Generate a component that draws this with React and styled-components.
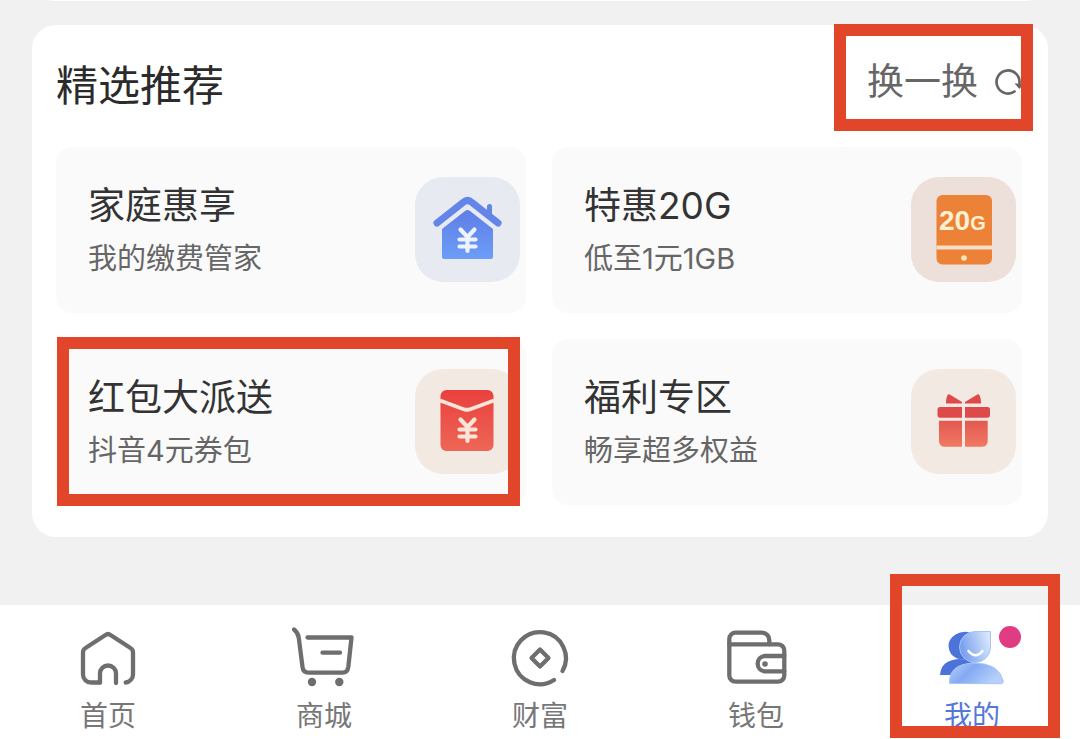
import React from "react";
import styled, { createGlobalStyle } from "styled-components";

const offers = [
  { title: "家庭惠享", text: "我的缴费管家", tile: "#e7ebf1", Icon: HouseIcon },
  { title: "特惠20G", text: "低至1元1GB", tile: "#eddfd9", Icon: PhoneIcon },
  {
    title: "红包大派送",
    text: "抖音4元券包",
    tile: "#f2e9e3",
    Icon: EnvelopeIcon,
    marked: true,
  },
  { title: "福利专区", text: "畅享超多权益", tile: "#f3e9e3", Icon: GiftIcon },
];

const tabs = [
  { label: "首页", Icon: HomeIcon },
  { label: "商城", Icon: CartIcon },
  { label: "财富", Icon: CoinIcon },
  { label: "钱包", Icon: WalletIcon },
  { label: "我的", Icon: UsersIcon, active: true },
];

export default function App() {
  return (
    <Page>
      <GlobalStyle />
      <PreviousSection>
        <PreviousCard />
      </PreviousSection>
      <Section>
        <SectionHeader>
          <SectionTitle>精选推荐</SectionTitle>
          <RefreshButton type="button">
            换一换
            <RefreshIcon />
            <Marker $inset="-1px -11px 16px -33px" />
          </RefreshButton>
        </SectionHeader>
        <OfferGrid>
          {offers.map(({ title, text, tile, Icon, marked }) => (
            <OfferCard href="#" key={title}>
              <OfferInfo>
                <OfferTitle>{title}</OfferTitle>
                <OfferText>{text}</OfferText>
              </OfferInfo>
              <OfferTile $color={tile}>
                <Icon />
              </OfferTile>
              {marked && <Marker $inset="-2px 6px -1px 1px" />}
            </OfferCard>
          ))}
        </OfferGrid>
      </Section>
      <TabBar>
        {tabs.map(({ label, Icon, active }) => (
          <Tab href="#" key={label} $active={active}>
            <TabIcon>
              <Icon />
              {active && <Badge />}
            </TabIcon>
            {label}
            {active && <Marker $inset="-31px 20px 1px 26px" />}
          </Tab>
        ))}
      </TabBar>
    </Page>
  );
}

function RefreshIcon() {
  return (
    <svg width="28" height="28" viewBox="0 0 28 28" overflow="visible">
      <path
        d="M20.5 23.5A11.5 11.5 0 1 1 25.5 15"
        fill="none"
        stroke="#666"
        strokeWidth="2.7"
        strokeLinecap="round"
      />
      <path d="M20.500 15.500H30L25.500 21z" fill="#666" />
    </svg>
  );
}

function YenMark({ y, color }) {
  return (
    <svg x="42" y={y} width="21" height="28" viewBox="0 0 21 28">
      <path
        d="M3.500 3.500L10.500 11L17.500 3.500M10.500 11V25M2.500 13.500H18.500M2.500 20.500H18.500"
        fill="none"
        stroke={color}
        strokeWidth="4.200"
        strokeLinecap="round"
        strokeLinejoin="round"
      />
    </svg>
  );
}

function HouseIcon() {
  return (
    <svg width="105" height="105" viewBox="0 0 105 105">
      <defs>
        <linearGradient id="house" x1="0" y1="0" x2="0" y2="1">
          <stop offset="0" stopColor="#5f7de6" />
          <stop offset="1" stopColor="#6c9df8" />
        </linearGradient>
      </defs>
      <path
        d="M22 46L48 25.500Q52.500 21.500 57 25.500L83 46"
        fill="none"
        stroke="#6385ea"
        strokeWidth="7"
        strokeLinecap="round"
        strokeLinejoin="round"
      />
      <path
        d="M74.500 29.500V39"
        stroke="#6385ea"
        strokeWidth="5"
        strokeLinecap="round"
      />
      <path
        d="M27 52L50 34Q52.500 32 55 34L78 52V80Q78 82 76 82H29Q27 82 27 80z"
        fill="url(#house)"
      />
      <YenMark y="49" color="#eef3ff" />
    </svg>
  );
}

function PhoneIcon() {
  return (
    <svg width="105" height="105" viewBox="0 0 105 105">
      <rect x="25.500" y="18" width="55.500" height="69.500" rx="6" fill="#ec8138" />
      <path d="M25.500 70.500H81" stroke="#f6dfc8" strokeWidth="4" />
      <circle cx="53" cy="81" r="2.800" fill="#ffe3b8" />
      <PhoneLabel x="28" y="53">
        20<tspan fontSize="20">G</tspan>
      </PhoneLabel>
    </svg>
  );
}

function EnvelopeIcon() {
  return (
    <svg width="105" height="105" viewBox="0 0 105 105">
      <defs>
        <linearGradient id="envelope" x1="0" y1="0" x2="0" y2="1">
          <stop offset="0" stopColor="#e9403e" />
          <stop offset="1" stopColor="#ee6656" />
        </linearGradient>
      </defs>
      <rect x="25.500" y="21" width="53" height="61" rx="6" fill="url(#envelope)" />
      <path
        d="M25 31.500L48 40Q52 41.500 56 40L79 31.500"
        fill="none"
        stroke="#fbe4d8"
        strokeWidth="3.800"
      />
      <YenMark y="47" color="#fbe4d8" />
    </svg>
  );
}

function GiftIcon() {
  return (
    <svg width="105" height="105" viewBox="0 0 105 105">
      <defs>
        <linearGradient id="gift" x1="0" y1="51" x2="0" y2="78" gradientUnits="userSpaceOnUse">
          <stop offset="0" stopColor="#e25750" />
          <stop offset="1" stopColor="#f07a64" />
        </linearGradient>
      </defs>
      <g fill="#dd4a49">
        <path d="M35 34.500Q35 28 37 25.500Q38 25 39.500 26L51 33V34.500z" />
        <path d="M70 34.500Q70 28 68 25.500Q67 25 65.500 26L54 33V34.500z" />
        <path d="M29 38H51V48.700H29Q26.500 48.700 26.500 46V40.500Q26.500 38 29 38z" />
        <path d="M54 38H76.500Q79 38 79 40.500V46Q79 48.700 76.500 48.700H54z" />
      </g>
      <g fill="url(#gift)">
        <path d="M28 51.700H51V77.700H34Q28 77.700 28 71.700z" />
        <path d="M54 51.700H76.700V71.700Q76.700 77.700 70.700 77.700H54z" />
      </g>
    </svg>
  );
}

function HomeIcon() {
  return (
    <LineSvg viewBox="0 0 64 64">
      <path d="M24 55.500H15A8 8 0 0 1 7 47.500V25.500Q7 22.500 9.500 21L29.500 8Q32 6 34.500 8L54.500 21Q57 22.500 57 25.500V47.500A8 8 0 0 1 49.700 55.500" />
      <path d="M24 55.500V46.500A8 8 0 0 1 40 46.500V56" />
    </LineSvg>
  );
}

function CartIcon() {
  return (
    <LineSvg viewBox="0 0 64 64">
      <path d="M2 2.500Q6 5.500 6.800 11L10.500 40Q11.200 45.700 16.500 45.700H50.500Q55.500 45.700 56.300 40L59.500 10.500H15.500" />
      <path d="M30.500 25.700H48" />
      <circle className="solid" cx="20" cy="55" r="4.200" />
      <circle className="solid" cx="47.300" cy="55" r="4.200" />
    </LineSvg>
  );
}

function CoinIcon() {
  return (
    <LineSvg viewBox="0 0 64 64">
      <path d="M46 53A26 26 0 1 1 54.500 44" />
      <path d="M32 22.500L40.500 31L32 39.500L23.500 31z" />
    </LineSvg>
  );
}

function WalletIcon() {
  return (
    <LineSvg viewBox="0 0 64 64">
      <path d="M5.300 17.300V12A6.300 6.300 0 0 1 11.600 5.700H38A7.300 7.300 0 0 1 45.300 13V17.300" />
      <path d="M5.300 17.300H54A6.300 6.300 0 0 1 60.300 23.600V48.400A6.300 6.300 0 0 1 54 54.700H11.600A6.300 6.300 0 0 1 5.300 48.400z" />
      <path d="M60.300 29H40.500A7.700 7.700 0 0 0 40.500 44.300H60.300" />
      <circle className="solid" cx="41" cy="37" r="2.800" />
    </LineSvg>
  );
}

function UsersIcon() {
  return (
    <svg width="64" height="64" viewBox="0 0 64 64">
      <defs>
        <linearGradient id="face" x1="0" y1="0.600" x2="1" y2="0.300">
          <stop offset="0" stopColor="#7199ee" />
          <stop offset="1" stopColor="#d9e8fb" />
        </linearGradient>
        <linearGradient id="body" x1="0" y1="0" x2="1" y2="0.400">
          <stop offset="0" stopColor="#b9d2fa" />
          <stop offset="0.450" stopColor="#85a9f3" />
          <stop offset="1" stopColor="#b5d0fa" />
        </linearGradient>
      </defs>
      <path d="M31 5.500Q22 3.500 15.500 7.500Q8.500 12 8.500 19Q9 28 17 31.500L26 33z" fill="#4c73da" />
      <path d="M0 48Q1 33 19 32Q32 32 36 40L12 48z" fill="#4c73da" />
      <path
        d="M9.500 56.500Q8.500 37 34 36Q59 36 63.300 54Q63.300 56.700 61 56.700z"
        fill="url(#body)"
        stroke="#a9c6f8"
        strokeWidth="1"
      />
      <path
        d="M35 4.500H50.500V20A15.500 15.500 0 1 1 35 4.500z"
        fill="url(#face)"
        stroke="#a6c4f7"
        strokeWidth="1"
      />
      <path
        d="M28.500 24Q35.500 32.500 42.500 24"
        fill="none"
        stroke="#fff"
        strokeWidth="2.600"
        strokeLinecap="round"
      />
    </svg>
  );
}

const GlobalStyle = createGlobalStyle`
  * {
    box-sizing: border-box;
  }
  body {
    margin: 0;
    background-color: #f1f1f1;
    font-family: Inter, "Noto Sans CJK SC", sans-serif;
  }
  a {
    color: inherit;
    text-decoration: none;
  }
`;

const Page = styled.div`
  min-height: 100vh;
  display: flex;
  flex-direction: column;
  overflow: hidden;
`;

// only the lower edge of the card above is in view
const PreviousSection = styled.div`
  height: 1px;
  flex-shrink: 0;
  display: flex;
  align-items: flex-end;
  overflow: hidden;
  padding: 0 32px;
`;

const PreviousCard = styled.div`
  flex: 1;
  height: 48px;
  border-radius: 24px;
  background-color: white;
`;

const Section = styled.section`
  margin: 24px 32px 68px;
  padding: 0 26px 32px 24px;
  border-radius: 24px;
  background-color: white;
`;

const SectionHeader = styled.header`
  height: 122px;
  display: flex;
  justify-content: space-between;
  align-items: center;
`;

const SectionTitle = styled.h2`
  margin: 0;
  font-size: 42px;
  font-weight: 400;
  line-height: 60px;
  color: #2b2b2b;
`;

const RefreshButton = styled.button`
  position: relative;
  height: 100%;
  display: flex;
  align-items: center;
  gap: 16px;
  padding: 0 0 8px;
  border: none;
  background: none;
  font-family: inherit;
  font-size: 37px;
  line-height: 54px;
  color: #666;
  cursor: pointer;
`;

const OfferGrid = styled.div`
  display: grid;
  grid-template-columns: 1fr 1fr;
  gap: 26px;
`;

const OfferCard = styled.a`
  position: relative;
  height: 166px;
  display: flex;
  justify-content: space-between;
  align-items: center;
  padding: 0 6px 2px 32px;
  border-radius: 16px;
  background-color: #fafafa;
`;

const OfferInfo = styled.div`
  display: flex;
  flex-direction: column;
  gap: 4px;
  padding-top: 2px;
`;

const OfferTitle = styled.div`
  font-size: 37px;
  line-height: 54px;
  color: #333;
`;

const OfferText = styled.div`
  font-size: 29px;
  line-height: 44px;
  color: #666;
`;

const OfferTile = styled.div`
  width: 105px;
  height: 105px;
  flex-shrink: 0;
  border-radius: 28px;
  background-color: ${(props) => props.$color};
`;

const PhoneLabel = styled.text`
  font-family: "Liberation Sans", sans-serif;
  font-size: 28px;
  font-weight: 700;
  fill: #fff0d0;
`;

const TabBar = styled.nav`
  flex: 1;
  display: flex;
  background-color: white;
`;

const Tab = styled.a`
  position: relative;
  flex: 1;
  height: 134px;
  display: flex;
  flex-direction: column;
  align-items: center;
  gap: 4px;
  padding-top: 22px;
  font-size: 28px;
  line-height: 42px;
  color: ${(props) => (props.$active ? "#5577d8" : "#777")};
`;

const TabIcon = styled.span`
  position: relative;
  width: 64px;
  height: 64px;
`;

const LineSvg = styled.svg`
  width: 64px;
  height: 64px;
  fill: none;
  stroke: #6e6e6e;
  stroke-width: 4.3;
  stroke-linecap: round;
  stroke-linejoin: round;

  .solid {
    fill: #6e6e6e;
    stroke: none;
  }
`;

const Badge = styled.span`
  position: absolute;
  top: -1px;
  right: -17px;
  width: 22px;
  height: 22px;
  border-radius: 50%;
  background-color: #e03c83;
`;

const Marker = styled.span`
  position: absolute;
  inset: ${(props) => props.$inset};
  border: 12px solid #e1462a;
  pointer-events: none;
`;
